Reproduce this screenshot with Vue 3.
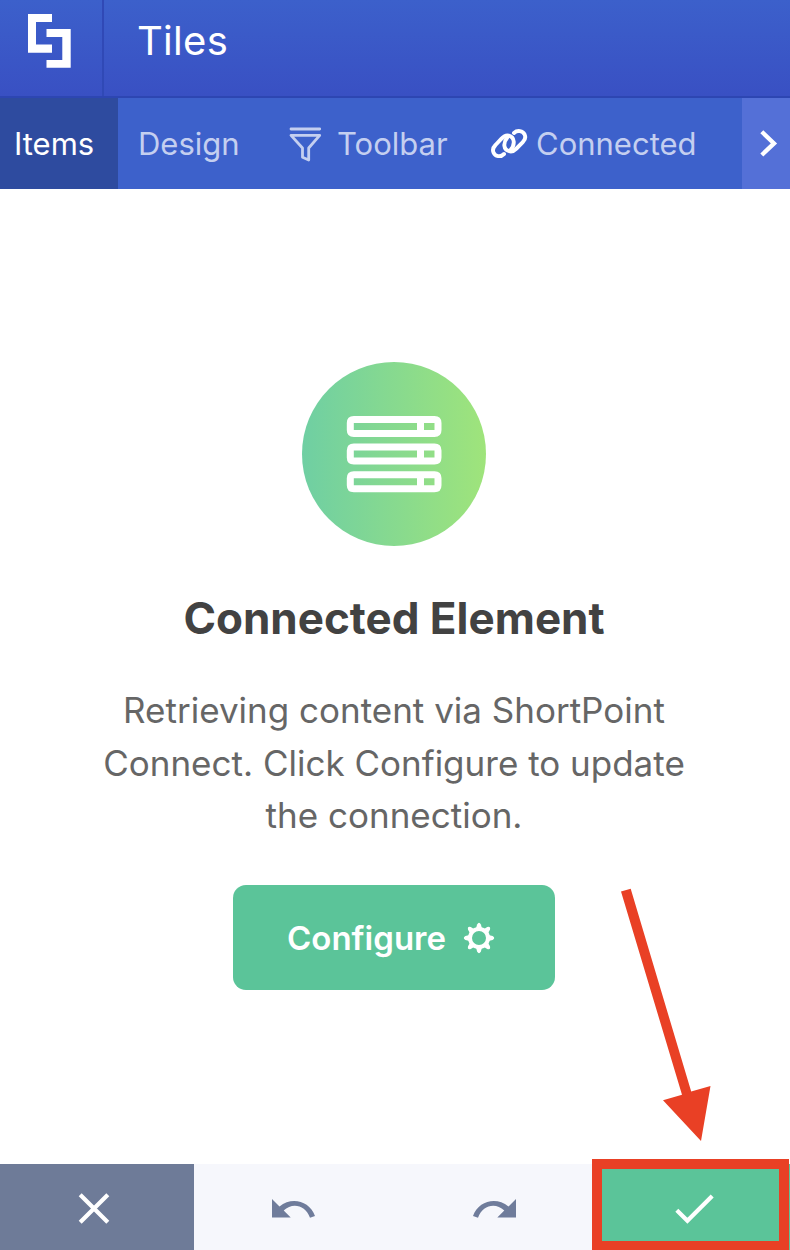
<script setup>
const rows = [416, 443.6, 471.2]
const teeth = [0, 45, 90, 135, 180, 225, 270, 315]
</script>

<template>
  <div class="panel">
    <header class="top">
      <div class="logo">
        <svg width="102" height="96" viewBox="0 0 102 96">
          <path d="M28 14H52V22H36V44.5H52V52.7H28ZM46.5 29H70.7V67.8H46.5V60H62.3V37H46.5Z" fill="#fff" />
        </svg>
      </div>
      <h1 class="title">Tiles</h1>
    </header>

    <nav class="tabs">
      <a class="tab active"><span class="t-items">Items</span></a>
      <a class="tab design"><span class="t-design">Design</span></a>
      <a class="tab toolbar">
        <svg width="34" height="38" viewBox="288 123 34 38" fill="none" stroke="#c4cff0" stroke-width="2.8" stroke-linejoin="round" stroke-linecap="round">
          <path d="M291 127H319.7M291 133.4H319.7L308.7 146V158L302.5 155.3V146Z" />
        </svg>
        <span class="t-toolbar">Toolbar</span>
      </a>
      <a class="tab connected">
        <svg width="38" height="32" viewBox="490 127 38 32" fill="none" stroke="#fff" stroke-width="3.9" stroke-linecap="round">
          <path d="M504 153C500.5 156.5 495.2 155.5 493.5 151.5C492.2 148.4 493.5 146 495.5 144L501.5 137.7C504 135 506.2 134 508.8 134.7C514.7 136.3 515.4 143.5 510.5 149" />
          <path d="M514 132C517.5 128.8 522.8 129.8 524.7 133.7C526 136.7 524.8 139.2 522.8 141.2L516.5 147.5C514 150 511.7 151 509.2 150.2C503.4 148.6 502.7 142 507.5 136.3" />
        </svg>
        <span class="t-connected">Connected</span>
      </a>
      <a class="next">
        <svg width="48" height="91" viewBox="742 98 48 91"><path d="M761.8 131.8L774 143.4L761.8 155" fill="none" stroke="#fff" stroke-width="4.3" /></svg>
      </a>
    </nav>

    <main class="content">
      <svg class="badge" width="184" height="184" viewBox="302 362 184 184">
        <defs>
          <linearGradient id="mint">
            <stop offset="0" stop-color="#6fcfa3" />
            <stop offset="1" stop-color="#9fe47b" />
          </linearGradient>
        </defs>
        <circle cx="394" cy="454" r="92" fill="url(#mint)" />
        <g v-for="y in rows" :key="y" fill="none" stroke="#fff" stroke-width="7">
          <path :d="`M353.8 ${y}H434.5Q441.5 ${y} 441.5 ${y + 7}V${y + 14}Q441.5 ${y + 21} 434.5 ${y + 21}H353.8Q346.8 ${y + 21} 346.8 ${y + 14}V${y + 7}Q346.8 ${y} 353.8 ${y}ZM353.8 ${y + 7}V${y + 14}H417V${y + 7}ZM424 ${y + 7}V${y + 14}H434.5V${y + 7}Z`" fill="#fff" fill-rule="evenodd" stroke="none" />
        </g>
      </svg>
      <h2 class="heading">Connected Element</h2>
      <p class="copy">
        <span class="l1">Retrieving content via ShortPoint</span>
        <span class="l2">Connect. Click Configure to update</span>
        <span class="l3">the connection.</span>
      </p>
      <button class="configure">
        <span>Configure</span>
        <svg width="32" height="32" viewBox="-16 -16 32 32" fill="none" stroke="#fff">
          <circle r="9" stroke-width="4" />
          <path v-for="a in teeth" :key="a" d="M-3 -9.5L-1.9 -13.6Q0 -16.8 1.9 -13.6L3 -9.5Z" :transform="`rotate(${a})`" fill="#fff" stroke="none" />
        </svg>
      </button>
    </main>

    <footer class="actions">
      <button class="act cancel">
        <svg width="194" height="86" viewBox="0 1164 194 86"><path d="M80.2 1194.8L107.8 1222.2M107.8 1194.8L80.2 1222.2" stroke="#fff" stroke-width="4.2" /></svg>
      </button>
      <button class="act">
        <svg width="200" height="86" viewBox="194 1164 200 86"><path d="M272 1199L279.5 1206.4C292 1196.5 309.5 1201 315 1216L310 1217.7C305.5 1205 292.5 1202 283.7 1210.4L290.7 1217.6H272Z" fill="#6f7c9b" /></svg>
      </button>
      <button class="act">
        <svg width="198" height="86" viewBox="394 1164 198 86"><path d="M516 1199L508.5 1206.4C496 1196.5 478.5 1201 473 1216L478 1217.7C482.5 1205 495.5 1202 504.3 1210.4L497.3 1217.6H516Z" fill="#6f7c9b" /></svg>
      </button>
      <button class="act save">
        <svg width="198" height="86" viewBox="592 1164 198 86"><path d="M676.8 1210.2L687.4 1220.8L712.2 1196" fill="none" stroke="#fff" stroke-width="4.2" /></svg>
      </button>
    </footer>

    <svg class="callout" width="790" height="1250" viewBox="0 0 790 1250">
      <path d="M621 891.5L630.7 888.8L691.2 1091.6L710.5 1086L701 1141L663 1100.3L682 1094.8Z" fill="#e94025" />
      <rect x="597" y="1164" width="187" height="82" fill="none" stroke="#e94025" stroke-width="10" />
    </svg>
  </div>
</template>

<style>
body { margin: 0; }
</style>

<style scoped>
.panel { position: relative; width: 790px; height: 1250px; overflow: hidden; display: flex; flex-direction: column; background: #fff; font-family: Inter, "Liberation Sans", sans-serif; }
svg { display: block; flex: none; }
button { border: 0; padding: 0; margin: 0; font: inherit; background: none; }
h1, h2, p { margin: 0; }
span { white-space: nowrap; }
.top { box-sizing: border-box; height: 98px; flex: none; display: flex; border-bottom: 2px solid #2d46b2; background: linear-gradient(#3c60cb, #3950c3); }
.logo { width: 102px; border-right: 2px solid #3049b6; }
.title { padding: 17px 0 0 33px; font-size: 40px; line-height: 48px; font-weight: 400; color: #fff; letter-spacing: 0.3px; }
.tabs { height: 91px; flex: none; display: flex; background: #3d61cb; color: #c4cff0; font-size: 31px; line-height: 92px; }
.tab { display: flex; align-items: center; box-sizing: border-box; }
.active { width: 118px; padding-left: 14px; background: #2e4b9f; color: #fff; }
.design { width: 170px; padding-left: 20px; }
.toolbar { width: 202px; gap: 15px; }
.connected { width: 252px; gap: 8px; }
.next { width: 48px; background: #5470d7; }
.content { height: 975px; flex: none; display: flex; flex-direction: column; align-items: center; box-sizing: border-box; padding: 173px 2px 0 0; }
.heading { margin-top: 45px; font-size: 44px; line-height: 54px; font-weight: 700; color: #424242; white-space: nowrap; }
.copy { display: flex; flex-direction: column; align-items: center; margin-top: 39px; font-size: 35px; line-height: 52.5px; color: #666; }
.configure { margin-top: 43px; width: 322px; height: 105px; border-radius: 13px; background: #5bc499; color: #fff; display: flex; align-items: center; justify-content: center; gap: 17px; font-size: 33px; font-weight: 600; line-height: 40px; padding: 2px 6px 0 0; box-sizing: border-box; }
.actions { height: 86px; flex: none; display: flex; background: #f6f7fc; }
.cancel { background: #6e7b98; }
.save { background: #5bc499; }
.callout { position: absolute; left: 0; top: 0; pointer-events: none; }
</style>
